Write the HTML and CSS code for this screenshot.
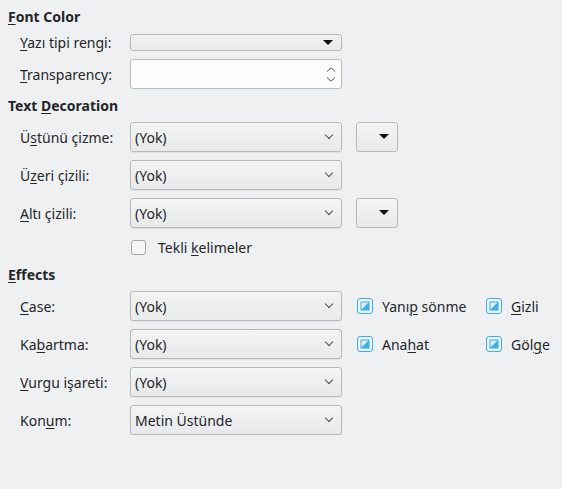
FILE: index.html
```html
<!DOCTYPE html>
<html lang="tr">
<head>
    <meta charset="UTF-8">
    <title>Font Effects</title>
    <link rel="stylesheet" href="styles.css">
</head>
<body>
<div class="page">
    <!-- Font Color -->
    <div class="group-title"><u>F</u>ont Color</div>
    <div class="row row-first">
        <span class="label"><u>Y</u>azı tipi rengi:</span>
        <div class="color-drop">
            <svg width="10" height="5" viewBox="0 0 10 5"><path d="M0 0H10L5 5Z" fill="#111"/></svg>
        </div>
    </div>
    <div class="row">
        <span class="label"><u>T</u>ransparency:</span>
        <div class="spinbox">
            <svg width="10" height="15" viewBox="0 0 10 15">
                <path d="M1 4.5L5 0.8L9 4.5M1 10.5L5 14.2L9 10.5" fill="none" stroke="#4d4f52" stroke-width="1"/>
            </svg>
        </div>
    </div>

    <!-- Text Decoration -->
    <div class="group-title group-gap">Text <u>D</u>ecoration</div>
    <div class="row row-first-tall">
        <span class="label">Ü<u>s</u>tünü çizme:</span>
        <div class="combo"><span>(Yok)</span><span class="chev"></span></div>
        <div class="color-btn">
            <svg width="10" height="5" viewBox="0 0 10 5"><path d="M0 0H10L5 5Z" fill="#111"/></svg>
        </div>
    </div>
    <div class="row">
        <span class="label">Ü<u>z</u>eri çizili:</span>
        <div class="combo"><span>(Yok)</span><span class="chev"></span></div>
    </div>
    <div class="row">
        <span class="label"><u>A</u>ltı çizili:</span>
        <div class="combo"><span>(Yok)</span><span class="chev"></span></div>
        <div class="color-btn">
            <svg width="10" height="5" viewBox="0 0 10 5"><path d="M0 0H10L5 5Z" fill="#111"/></svg>
        </div>
    </div>
    <div class="row row-check">
        <span class="checkbox"></span>
        <span>Tekli <u>k</u>elimeler</span>
    </div>

    <!-- Effects -->
    <div class="group-title effects-gap"><u>E</u>ffects</div>
    <div class="row row-first-tall">
        <span class="label"><u>C</u>ase:</span>
        <div class="combo"><span>(Yok)</span><span class="chev"></span></div>
        <div class="check-item wide">
            <svg class="tri" width="16" height="16" viewBox="0 0 16 16">
                <rect x="0.5" y="0.5" width="15" height="15" rx="2.5" fill="#eaf5fc" stroke="#3daee9"/>
                <rect x="4" y="4" width="8" height="8" fill="#dff0fa" stroke="#3daee9" stroke-width="1"/>
                <path d="M12 4V12H4Z" fill="#3daee9"/>
            </svg>
            <span>Yanı<u>p</u> sönme</span>
        </div>
        <div class="check-item">
            <svg class="tri" width="16" height="16" viewBox="0 0 16 16">
                <rect x="0.5" y="0.5" width="15" height="15" rx="2.5" fill="#eaf5fc" stroke="#3daee9"/>
                <rect x="4" y="4" width="8" height="8" fill="#dff0fa" stroke="#3daee9" stroke-width="1"/>
                <path d="M12 4V12H4Z" fill="#3daee9"/>
            </svg>
            <span><u>G</u>izli</span>
        </div>
    </div>
    <div class="row">
        <span class="label">Ka<u>b</u>artma:</span>
        <div class="combo"><span>(Yok)</span><span class="chev"></span></div>
        <div class="check-item wide">
            <svg class="tri" width="16" height="16" viewBox="0 0 16 16">
                <rect x="0.5" y="0.5" width="15" height="15" rx="2.5" fill="#eaf5fc" stroke="#3daee9"/>
                <rect x="4" y="4" width="8" height="8" fill="#dff0fa" stroke="#3daee9" stroke-width="1"/>
                <path d="M12 4V12H4Z" fill="#3daee9"/>
            </svg>
            <span>Ana<u>h</u>at</span>
        </div>
        <div class="check-item">
            <svg class="tri" width="16" height="16" viewBox="0 0 16 16">
                <rect x="0.5" y="0.5" width="15" height="15" rx="2.5" fill="#eaf5fc" stroke="#3daee9"/>
                <rect x="4" y="4" width="8" height="8" fill="#dff0fa" stroke="#3daee9" stroke-width="1"/>
                <path d="M12 4V12H4Z" fill="#3daee9"/>
            </svg>
            <span>Göl<u>g</u>e</span>
        </div>
    </div>
    <div class="row">
        <span class="label"><u>V</u>urgu işareti:</span>
        <div class="combo"><span>(Yok)</span><span class="chev"></span></div>
    </div>
    <div class="row">
        <span class="label">Kon<u>u</u>m:</span>
        <div class="combo"><span>Metin Üstünde</span><span class="chev"></span></div>
    </div>
</div>
</body>
</html>
```

FILE: styles.css
```css
/* reset */
* {
    margin: 0;
    padding: 0;
    box-sizing: border-box;
}

body {
    background: #eff0f1;
    color: #232629;
    font-family: "Noto Sans", "Open Sans", sans-serif;
    font-size: 14px;
}

.page {
    padding: 8px 8px 0 8px;
}

u {
    text-decoration: underline;
    text-decoration-thickness: 1px;
    text-underline-offset: 2px;
}

/* group headings */
.group-title {
    font-weight: bold;
    line-height: 18px;
    height: 18px;
}

.group-gap {
    margin-top: 8px;
}

.effects-gap {
    margin-top: 10px;
}

/* form rows */
.row {
    display: flex;
    align-items: center;
    margin-left: 12px;
    margin-top: 8px;
    height: 30px;
}

.row-first {
    height: 17px;
}

.row-first-tall {
    margin-top: 7px;
}

.row-check {
    margin-top: 11px;
    height: 17px;
    padding-left: 111px;
}

.label {
    width: 110px;
    flex-shrink: 0;
    white-space: nowrap;
}

/* combo box */
.combo {
    width: 212px;
    height: 30px;
    display: flex;
    align-items: center;
    justify-content: space-between;
    padding: 0 7px 0 4px;
    border: 1px solid #b6b8ba;
    border-radius: 3px;
    background: linear-gradient(#f3f4f4, #e8e9ea);
    box-shadow: 0 1px 1px rgba(0, 0, 0, 0.06);
}

.chev {
    width: 6px;
    height: 6px;
    margin-top: -4px;
    margin-right: 2px;
    border-right: 1px solid #4d4f52;
    border-bottom: 1px solid #4d4f52;
    transform: rotate(45deg);
}

/* font color dropdown */
.color-drop {
    width: 212px;
    height: 17px;
    display: flex;
    align-items: center;
    justify-content: flex-end;
    padding-right: 8px;
    border: 1px solid #b6b8ba;
    border-radius: 3px;
    background: linear-gradient(#f1f2f2, #e9eaeb);
}

/* spin box */
.spinbox {
    width: 212px;
    height: 30px;
    display: flex;
    align-items: center;
    justify-content: flex-end;
    padding-right: 5px;
    border: 1px solid #babcbe;
    border-radius: 3px;
    background: #fcfcfc;
}

/* small colour button */
.color-btn {
    width: 42px;
    height: 30px;
    margin-left: 14px;
    display: flex;
    align-items: center;
    justify-content: flex-end;
    padding-right: 8px;
    padding-bottom: 2px;
    border: 1px solid #b6b8ba;
    border-radius: 3px;
    background: linear-gradient(#f3f4f4, #e8e9ea);
}

/* checkboxes */
.checkbox {
    width: 15px;
    height: 15px;
    margin-right: 12px;
    border: 1px solid #a3a5a8;
    border-radius: 3px;
    background: #f5f6f6;
}

.check-item {
    display: flex;
    align-items: center;
    white-space: nowrap;
}

.check-item.wide {
    width: 129px;
    margin-left: 15px;
}

.tri {
    margin-right: 9px;
    flex-shrink: 0;
}
```
